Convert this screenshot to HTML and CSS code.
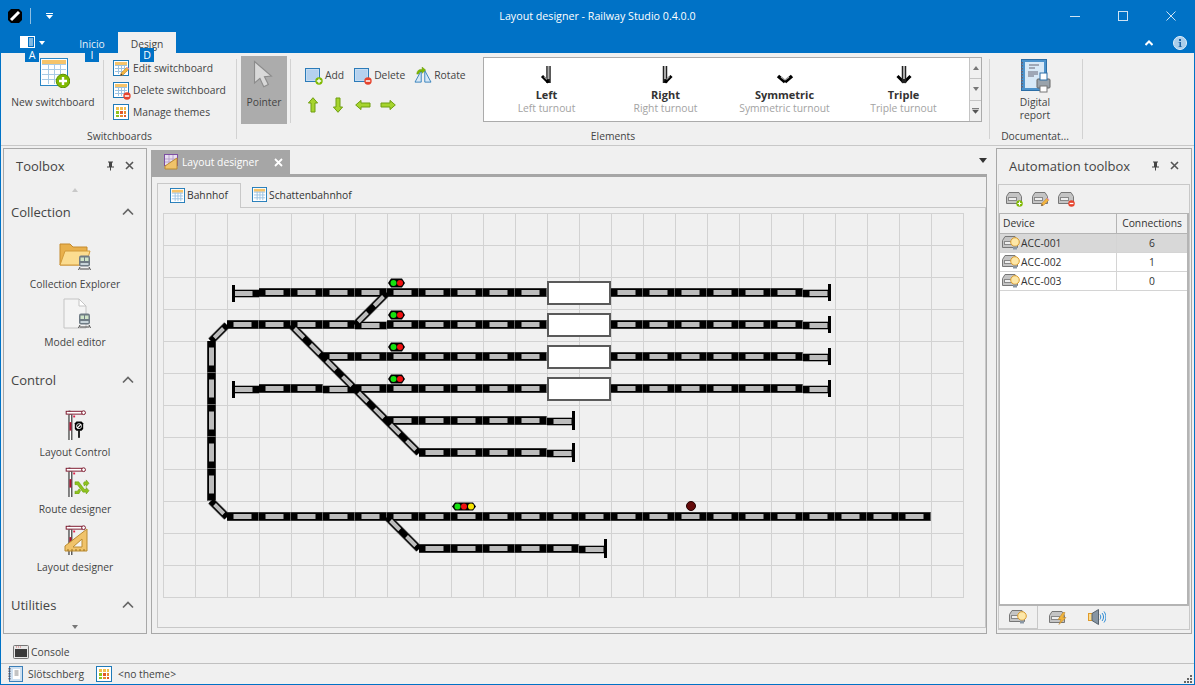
FILE: index.html
```html
<!DOCTYPE html>
<html lang="en">
<head>
<meta charset="utf-8">
<title>Layout designer - Railway Studio 0.4.0.0</title>
<link rel="stylesheet" href="styles.css">
</head>
<body>
<svg class="defs" width="0" height="0" aria-hidden="true">
  <defs>
    <symbol id="i-table" viewBox="0 0 16 16">
      <rect x=".5" y=".5" width="15" height="15" fill="#fff" stroke="#1f7ab8"/>
      <rect x="2" y="2" width="12" height="3" fill="#f6c46a"/>
      <path d="M2 5.500h12M2 8.500h12M2 11.500h12M5.500 5v9M8.500 5v9M11.500 5v9" stroke="#9cc3e2" fill="none"/>
    </symbol>
    <symbol id="i-table-big" viewBox="0 0 30 30">
      <rect x=".5" y=".5" width="27" height="27" fill="#fff" stroke="#2b86c5"/>
      <rect x="2" y="2" width="24" height="4" fill="#f6c46a"/>
      <path d="M2 6.500h24M2 11.500h24M2 16.500h24M2 21.500h24M8.500 6v20M14.500 6v20M20.500 6v20" stroke="#a8cbe6" fill="none"/>
      <circle cx="23" cy="23" r="6.800" fill="#7fb900" stroke="#5d9100"/>
      <path d="M19 23h8M23 19v8" stroke="#fff" stroke-width="2.400"/>
    </symbol>
    <symbol id="i-theme" viewBox="0 0 16 16">
      <rect x=".5" y=".5" width="15" height="15" fill="#fff" stroke="#1f7ab8"/>
      <path d="M3 3h3v3H3zM7 3h3v3H7zM11 3h2v3h-2z" fill="#f2c04f"/>
      <path d="M3 7h3v3H3zM3 11h3v2H3z" fill="#8fc31f"/>
      <path d="M7 7h3v3H7zM11 11h2v2h-2z" fill="#e2572b"/>
      <path d="M11 7h2v3h-2zM7 11h3v2H7z" fill="#e88a2e"/>
    </symbol>
    <symbol id="i-pencil" viewBox="0 0 16 16">
      <path d="M2 14l1-4 8-8 3 3-8 8z" fill="#f3b53f" stroke="#b5762a" stroke-width=".7"/>
      <path d="M11 2l3 3 1-1-3-3z" fill="#e58ac0"/>
      <path d="M2 14l1-3 2 2z" fill="#333"/>
    </symbol>
    <symbol id="i-square" viewBox="0 0 16 16">
      <rect x=".5" y="1.500" width="14" height="13" fill="#c5dcf2" stroke="#2b7bb9"/>
      <rect x="2" y="3" width="11" height="10" fill="#b5d1ee"/>
    </symbol>
    <symbol id="i-plus" viewBox="0 0 8 8">
      <circle cx="4" cy="4" r="3.700" fill="#7fb900"/><path d="M1.800 4h4.400M4 1.800v4.400" stroke="#fff" stroke-width="1.300"/>
    </symbol>
    <symbol id="i-minus" viewBox="0 0 8 8">
      <circle cx="4" cy="4" r="3.700" fill="#e5432d"/><path d="M1.800 4h4.400" stroke="#fff" stroke-width="1.500"/>
    </symbol>
    <symbol id="i-rotate" viewBox="0 0 20 18">
      <path d="M8 4v13H1z" fill="#d8e8f6" stroke="#2b7bb9"/>
      <path d="M12 4v13h7z" fill="#d8e8f6" stroke="#2b7bb9"/>
      <path d="M3 8c0-4 3-6 6-5V0l4 3.500L9 7V5C7 5 5 6 5 8z" fill="#7fb900" stroke="#5d9100" stroke-width=".5"/>
    </symbol>
    <symbol id="i-arrow" viewBox="0 0 16 16">
      <path d="M8 .7L12.600 6H10v9H6V6H3.400z" fill="#a6d42e" stroke="#6f9e10"/>
    </symbol>
    <symbol id="i-pointer" viewBox="0 0 30 36">
      <path d="M2 1v28l7-6 5 11 6-3-5-10 9-1z" fill="#d9d9d9" stroke="#8c8c8c" stroke-width="1.500"/>
    </symbol>
    <symbol id="i-report" viewBox="0 0 32 34">
      <rect x="2.500" y=".5" width="25" height="31" fill="#4d93cc" stroke="#2c6ea6"/>
      <rect x="6" y="3" width="19" height="26" fill="#d8e9f7"/>
      <path d="M10 6h10M10 9h6M9 13h10M9 15h10M9 17h6" stroke="#667" fill="none"/>
      <path d="M3 3v26" stroke="#667" stroke-width="2" stroke-dasharray="1.500 1.500"/>
      <rect x="18" y="20" width="13" height="9" rx="1" fill="#9aa3ab" stroke="#666"/>
      <rect x="21" y="14" width="7" height="7" fill="#fff" stroke="#2c6ea6"/>
      <rect x="21" y="27" width="7" height="6" fill="#fff" stroke="#777"/>
    </symbol>
    <symbol id="i-left" viewBox="0 0 18 18">
      <path d="M10.500 0v17" stroke="#222" stroke-width="4.500"/><path d="M10.500 0v13" stroke="#aaa" stroke-width="2"/><path d="M10.500 16.500L4 10" stroke="#000" stroke-width="3"/><path d="M9 13.500L6 10.500" stroke="#999" stroke-width="1.200"/>
    </symbol>
    <symbol id="i-right" viewBox="0 0 18 18">
      <path d="M8 0v17" stroke="#222" stroke-width="4.500"/><path d="M8 0v13" stroke="#aaa" stroke-width="2"/><path d="M8 16.500l6.500-6.500" stroke="#000" stroke-width="3"/><path d="M9.500 13.500l3-3" stroke="#999" stroke-width="1.200"/>
    </symbol>
    <symbol id="i-sym" viewBox="0 0 18 18">
      <path d="M9 16L2 10M9 16l7-6" stroke="#000" stroke-width="3.500" fill="none"/><path d="M9 14l-4-3M9 14l4-3" stroke="#aaa" stroke-width="1.300" fill="none"/>
    </symbol>
    <symbol id="i-triple" viewBox="0 0 18 18">
      <path d="M9 16.500L2.500 10M9 16.500l6.500-6.500" stroke="#000" stroke-width="3" fill="none"/><path d="M9 0v17" stroke="#222" stroke-width="4.500"/><path d="M9 0v13" stroke="#aaa" stroke-width="2"/>
    </symbol>
    <symbol id="i-folder" viewBox="0 0 32 32">
      <path d="M1 4h10l3 3h14v18H1z" fill="#e8b04c" stroke="#c58a2c"/>
      <path d="M1 25l5-14h25l-4 14z" fill="#fbdc90" stroke="#d29a3a"/>
    </symbol>
    <symbol id="i-page" viewBox="0 0 32 32">
      <path d="M5 1h15l7 7v22H5z" fill="#f4f4f4" stroke="#c4c4c4"/>
      <path d="M20 1v7h7z" fill="#fff" stroke="#c4c4c4"/>
    </symbol>
    <symbol id="i-train" viewBox="0 0 13 15">
      <rect x="1" y=".5" width="11" height="11" rx="2" fill="#6f7b84"/>
      <rect x="2.500" y="2.500" width="3.500" height="3.500" fill="#cfe4c8"/><rect x="7" y="2.500" width="3.500" height="3.500" fill="#cfe4c8"/>
      <rect x="2.500" y="8" width="8" height="2" fill="#c8d4da"/>
      <path d="M2 12l-1.500 3M11 12l1.500 3M2 14h9" stroke="#444" fill="none"/>
    </symbol>
    <symbol id="i-semaphore" viewBox="0 0 32 34">
      <path d="M7 3h2v2H7zM7 7h4v29H7z" fill="#000"/>
      <rect x="8" y="7" width="2" height="27" fill="#fff"/>
      <rect x="8" y="15" width="2" height="9" fill="#b01030"/>
      <rect x="4.500" y="3.500" width="17" height="3" fill="#fff" stroke="#7a1228"/>
      <circle cx="23" cy="5" r="2" fill="#fff" stroke="#7a1228"/>
      <rect x="12" y="8" width="2" height="2" fill="#e0204a"/>
    </symbol>
    <symbol id="i-stop" viewBox="0 0 12 20">
      <path d="M3 .5h6l2 2v7l-2 2H3l-2-2v-7z" fill="#000"/>
      <path d="M3.500 8.500l5-5" stroke="#fff" stroke-width="1.500"/><circle cx="6" cy="6" r="3" fill="none" stroke="#fff"/>
      <rect x="5" y="11" width="2" height="9" fill="#000"/>
    </symbol>
    <symbol id="i-cross" viewBox="0 0 17 16">
      <path d="M1 3h4l6 8h2V9l3 3.500-3 3.500v-2h-3.500L3.500 6H1zM1 13h2.500l2-2.500L7 12.500 5 16H1zM10 4.500L11 3h2V1l3 3.500L13 8V6h-1l-1 1.500z" fill="#8fc31f" stroke="#5d9100" stroke-width=".5"/>
    </symbol>
    <symbol id="i-square-rule" viewBox="0 0 24 24">
      <path d="M1 23v-5L23 1v22z" fill="#f0c36a" stroke="#b98a30"/>
      <path d="M9 19l9-8v8z" fill="#f6f6f6" stroke="#b98a30"/>
      <path d="M4 23v-2M8 23v-2M12 23v-2M16 23v-2M20 23v-2" stroke="#9a7020"/>
    </symbol>
    <symbol id="i-designer-tab" viewBox="0 0 16 16">
      <rect x=".5" y=".5" width="13" height="11" fill="#e8dff0" stroke="#7d4fa3"/>
      <path d="M1 5h12M1 8h12M5 1v10M9 1v10" stroke="#b9a2cc"/>
      <path d="M1 15v-3L13 4v11z" fill="#f0c36a" stroke="#b98a30"/>
    </symbol>
    <symbol id="i-device" viewBox="0 0 16 12">
      <path d="M3 .5h10l2.500 4v7H.5v-7z" fill="#c4c4c4" stroke="#777"/>
      <rect x="2.500" y="5.500" width="8" height="3" fill="#efefef" stroke="#888"/>
    </symbol>
    <symbol id="i-bulb" viewBox="0 0 10 13">
      <circle cx="5" cy="5" r="4.300" fill="#fde7a8" stroke="#d99b2e"/>
      <rect x="3" y="9.500" width="4" height="3" fill="#8a97a5"/>
    </symbol>
    <symbol id="i-bolt" viewBox="0 0 10 12">
      <path d="M6 0L1 7h3l-2 5 7-7H6l2-5z" fill="#f0b43c" stroke="#b87f20" stroke-width=".5"/>
    </symbol>
    <symbol id="i-speaker" viewBox="0 0 18 16">
      <rect x=".5" y="4.500" width="5" height="7" fill="#fbdc90" stroke="#e09a2a"/>
      <path d="M4 4.500L10.500 .5v15L4 11.500z" fill="#8695a3" stroke="#56626d"/>
      <path d="M12 5.500c1 1.500 1 3.500 0 5M14 4c2 2.500 2 5.500 0 8M16 2.500c2.500 3.500 2.500 7.500 0 11" stroke="#2b8bd5" fill="none"/>
    </symbol>
    <symbol id="i-pin" viewBox="0 0 9 10">
      <path d="M2 .5h5v1H6v4h2v1H5v3H4v-3H1v-1h2v-4H2z" fill="#444"/>
    </symbol>
    <symbol id="i-close" viewBox="0 0 9 9">
      <path d="M1 1l7 7M8 1L1 8" stroke="#555" stroke-width="1.600" fill="none"/>
    </symbol>
    <symbol id="i-chev" viewBox="0 0 12 8">
      <path d="M1 6.500l5-5 5 5" stroke="#666" stroke-width="1.700" fill="none"/>
    </symbol>
    <symbol id="i-console" viewBox="0 0 16 14">
      <rect x=".5" y=".5" width="15" height="13" rx="1" fill="#e8e8e8" stroke="#777"/>
      <rect x="2" y="4" width="12" height="8" fill="#3a3a3a"/>
      <path d="M3 2h1M5 2h1M7 2h1" stroke="#c66"/>
    </symbol>
    <symbol id="i-book" viewBox="0 0 16 16">
      <rect x="2.500" y=".5" width="13" height="15" fill="#cfe1f2" stroke="#3c7fb8"/>
      <rect x="6" y="3" width="7" height="10" fill="#fff"/>
      <path d="M7.500 5h4M7.500 7h4M7.500 9h4" stroke="#888"/>
      <path d="M2.500 2v12" stroke="#556" stroke-width="2" stroke-dasharray="1.500 1"/>
    </symbol>
    <pattern id="cells" x="163" y="213" width="32" height="32" patternUnits="userSpaceOnUse">
      <path class="cell-line" d="M.5 0v32M0 .5h32"/>
    </pattern>
    <path id="rail-straight" d="M259 292.500H547M611 292.500H803M227 324.500H355M387 324.500H547M611 324.500H803M323 356.500H547M611 356.500H803M259 388.500H323M355 388.500H547M611 388.500H803M387 420.500H547M419 452.500H547M227 516.500H931M419 548.500H579M211.500 341V501"/>
    <path id="rail-term" d="M259 293.500H233M803 293.500H829M355 325.500H387M259 389.500H233M803 389.500H829M323 389.500H355M803 325.500H829M803 357.500H829M547 421.500H573M547 453.500H573M579 549.500H605"/>
    <path id="rail-diag" d="M291 325L419 453M227 325L211 341M211 501L227 517M387 293L355 325M387 517L419 549"/>
  </defs>
</svg>

<div class="window">
  <header class="titlebar">
    <div class="qat">
      <svg class="app-icon" viewBox="0 0 14 14"><path d="M3 0h8l3 3v8l-3 3H3l-3-3V3z" fill="#000"/><path d="M3 11l8-8" stroke="#fff" stroke-width="3"/></svg>
      <span class="qat-sep"></span>
      <svg class="qat-caret" viewBox="0 0 7 6"><path d="M0 0h7v1H0zM0 2h7L3.500 6z" fill="#fff"/></svg>
    </div>
    <div class="title">Layout designer - Railway Studio 0.4.0.0</div>
    <div class="winctl">
      <span class="winbtn"><svg class="winglyph" viewBox="0 0 10 10"><path d="M0 5.500h10" stroke="#cfe3f3"/></svg></span>
      <span class="winbtn"><svg class="winglyph" viewBox="0 0 10 10"><rect x=".5" y=".5" width="9" height="9" fill="none" stroke="#cfe3f3"/></svg></span>
      <span class="winbtn"><svg class="winglyph" viewBox="0 0 10 10"><path d="M.5 .5l9 9M9.500 .5l-9 9" stroke="#cfe3f3"/></svg></span>
    </div>
  </header>

  <nav class="tabbar">
    <div class="appmenu">
      <svg class="appmenu-icon" viewBox="0 0 15 12"><rect x=".5" y=".5" width="6" height="11" fill="#fff" stroke="#fff"/><rect x="7.500" y=".5" width="7" height="11" fill="#0072c6" stroke="#fff"/><path d="M9 3h4M9 5h4M9 7h4M9 9h4" stroke="#fff"/></svg>
      <svg class="appmenu-caret" viewBox="0 0 6 4"><path d="M0 0h6L3 4z" fill="#fff"/></svg>
      <span class="keytip keytip-a">A</span>
    </div>
    <div class="tab">Inicio<span class="keytip keytip-i">I</span></div>
    <div class="tab tab-active">Design<span class="keytip keytip-d">D</span></div>
    <div class="tabbar-right">
      <svg class="collapse" viewBox="0 0 8 6"><path d="M.5 5L4 1.500 7.500 5" stroke="#fff" stroke-width="2" fill="none"/></svg>
      <svg class="info" viewBox="0 0 14 14"><circle cx="7" cy="7" r="6.500" fill="#a9cdea" stroke="#e3f0fa"/><path d="M6 3h2v2H6zM5.500 6H8v4.500h1V11H5.500v-.5h1V6.500h-1z" fill="#1c62a3"/></svg>
    </div>
  </nav>

  <section class="ribbon">
    <div class="group group-switch">
      <div class="group-body">
        <div class="big-btn big-new">
          <svg class="ico-new"><use href="#i-table-big"/></svg>
          <span>New switchboard</span>
        </div>
        <span class="vsep vsep-short"></span>
        <div class="small-col">
          <div class="small-btn"><span class="stack"><svg class="ico16"><use href="#i-table"/></svg><svg class="ov-pencil"><use href="#i-pencil"/></svg></span>Edit switchboard</div>
          <div class="small-btn"><span class="stack"><svg class="ico16"><use href="#i-table"/></svg><svg class="ov-badge"><use href="#i-minus"/></svg></span>Delete switchboard</div>
          <div class="small-btn"><span class="stack"><svg class="ico16"><use href="#i-theme"/></svg></span>Manage themes</div>
        </div>
      </div>
      <div class="group-label">Switchboards</div>
    </div>
    <span class="gsep"></span>
    <div class="group group-elements">
      <div class="group-body">
        <div class="pointer-btn">
          <svg class="ico-pointer"><use href="#i-pointer"/></svg>
          <span>Pointer</span>
        </div>
        <span class="vsep vsep-short2"></span>
        <div class="edit-col">
          <div class="edit-row">
            <div class="small-btn"><span class="stack"><svg class="ico16"><use href="#i-square"/></svg><svg class="ov-badge"><use href="#i-plus"/></svg></span>Add</div>
            <div class="small-btn"><span class="stack"><svg class="ico16"><use href="#i-square"/></svg><svg class="ov-badge"><use href="#i-minus"/></svg></span>Delete</div>
            <div class="small-btn"><span class="stack"><svg class="ico-rotate"><use href="#i-rotate"/></svg></span>Rotate</div>
          </div>
          <div class="arrow-row">
            <svg class="ico16"><use href="#i-arrow"/></svg>
            <svg class="ico16 rot180"><use href="#i-arrow"/></svg>
            <svg class="ico16 rot270"><use href="#i-arrow"/></svg>
            <svg class="ico16 rot90"><use href="#i-arrow"/></svg>
          </div>
        </div>
        <div class="gallery">
          <div class="gallery-items">
            <div class="gal-item"><svg class="ico-turnout"><use href="#i-left"/></svg><b>Left</b><span>Left turnout</span></div>
            <div class="gal-item"><svg class="ico-turnout"><use href="#i-right"/></svg><b>Right</b><span>Right turnout</span></div>
            <div class="gal-item"><svg class="ico-turnout"><use href="#i-sym"/></svg><b>Symmetric</b><span>Symmetric turnout</span></div>
            <div class="gal-item"><svg class="ico-turnout"><use href="#i-triple"/></svg><b>Triple</b><span>Triple turnout</span></div>
          </div>
          <div class="gallery-scroll">
            <span class="gs-btn"><i class="tri-up"></i></span>
            <span class="gs-btn"><i class="tri-down"></i></span>
            <span class="gs-btn"><i class="tri-more"></i></span>
          </div>
        </div>
      </div>
      <div class="group-label">Elements</div>
    </div>
    <span class="gsep"></span>
    <div class="group group-doc">
      <div class="group-body">
        <div class="big-btn big-doc">
          <svg class="ico-report"><use href="#i-report"/></svg>
          <span>Digital<br>report</span>
        </div>
      </div>
      <div class="group-label">Documentat...</div>
    </div>
    <span class="gsep"></span>
  </section>

  <main class="workspace">
    <aside class="panel toolbox">
      <div class="panel-head">
        <span class="panel-title">Toolbox</span>
        <svg class="pin"><use href="#i-pin"/></svg>
        <svg class="closex"><use href="#i-close"/></svg>
      </div>
      <div class="scroll-row scroll-top"><i class="tri-up tri-pale"></i></div>
      <div class="tb-head"><span>Collection</span><svg class="chev"><use href="#i-chev"/></svg></div>
      <div class="tb-item"><span class="tb-icon"><svg class="ico32"><use href="#i-folder"/></svg><svg class="ov-train"><use href="#i-train"/></svg></span><span>Collection Explorer</span></div>
      <div class="tb-item"><span class="tb-icon"><svg class="ico32"><use href="#i-page"/></svg><svg class="ov-train"><use href="#i-train"/></svg></span><span>Model editor</span></div>
      <div class="tb-head tb-head-next"><span>Control</span><svg class="chev"><use href="#i-chev"/></svg></div>
      <div class="tb-item"><span class="tb-icon"><svg class="ico32 ico-sema"><use href="#i-semaphore"/></svg><svg class="ov-stop"><use href="#i-stop"/></svg></span><span>Layout Control</span></div>
      <div class="tb-item"><span class="tb-icon"><svg class="ico32 ico-sema"><use href="#i-semaphore"/></svg><svg class="ov-cross"><use href="#i-cross"/></svg></span><span>Route designer</span></div>
      <div class="tb-item"><span class="tb-icon"><svg class="ico32 ico-sema"><use href="#i-semaphore"/></svg><svg class="ov-rule"><use href="#i-square-rule"/></svg></span><span>Layout designer</span></div>
      <div class="tb-head tb-head-next"><span>Utilities</span><svg class="chev"><use href="#i-chev"/></svg></div>
      <div class="scroll-row scroll-bottom"><i class="tri-down"></i></div>
    </aside>

    <section class="center">
      <div class="doc-tabs">
        <div class="doc-tab">
          <svg class="ico16"><use href="#i-designer-tab"/></svg>
          <span>Layout designer</span>
          <svg class="doc-close" viewBox="0 0 9 9"><path d="M1 1l7 7M8 1L1 8" stroke="#fff" stroke-width="1.800" fill="none"/></svg>
        </div>
        <i class="tri-down tri-dark doc-menu"></i>
      </div>
      <div class="doc-body">
        <div class="sheet-tabs">
          <div class="sheet-tab sheet-tab-active"><svg class="ico16"><use href="#i-table"/></svg>Bahnhof</div>
          <div class="sheet-tab"><svg class="ico16"><use href="#i-table"/></svg>Schattenbahnhof</div>
        </div>
        <div class="sheet">
          <svg class="diagram" viewBox="163 213 801 385" role="img" aria-label="Track layout Bahnhof">
            <rect class="cells" x="163" y="213" width="801" height="385"/>
            <g class="rail-edge"><use href="#rail-straight"/></g>
            <g class="term-edge"><use href="#rail-term"/></g>
            <g class="diag-edge"><use href="#rail-diag"/></g>
            <g class="rail-core"><use href="#rail-straight"/></g>
            <g class="term-core"><use href="#rail-term"/></g>
            <g class="diag-core"><use href="#rail-diag"/></g>
            <g class="rail-dash"><use href="#rail-straight"/></g>
            <g class="term-dash"><use href="#rail-term"/></g>
            <g class="diag-dash"><use href="#rail-diag"/></g>
            <path class="bumper" d="M233.500 285V302M233.500 381V398M829.500 284V301M829.500 316V333M829.500 348V365M829.500 380V397M573.500 411V430M573.500 443V462M605.500 539V558"/>
            <g class="building">
              <rect x="548" y="282" width="62" height="22"/>
              <rect x="548" y="314" width="62" height="22"/>
              <rect x="548" y="346" width="62" height="22"/>
              <rect x="548" y="378" width="62" height="22"/>
            </g>
            <g>
              <path class="sig" d="M391 278.500h11l3 4.500-3 4.500h-11l-3-4.500z"/><circle class="g" cx="393.500" cy="283" r="3"/><circle class="r" cx="400" cy="283" r="3"/>
              <path class="sig" d="M391 310.500h11l3 4.500-3 4.500h-11l-3-4.500z"/><circle class="g" cx="393.500" cy="315" r="3"/><circle class="r" cx="400" cy="315" r="3"/>
              <path class="sig" d="M391 342.500h11l3 4.500-3 4.500h-11l-3-4.500z"/><circle class="g" cx="393.500" cy="347" r="3"/><circle class="r" cx="400" cy="347" r="3"/>
              <path class="sig" d="M391 374.500h11l3 4.500-3 4.500h-11l-3-4.500z"/><circle class="g" cx="393.500" cy="379" r="3"/><circle class="r" cx="400" cy="379" r="3"/>
              <path class="sig" d="M455 502.500h18l3 4-3 4h-18l-3-4z"/><circle class="g" cx="457.500" cy="506.500" r="3"/><circle class="r" cx="464" cy="506.500" r="3"/><circle class="y" cx="471" cy="506.500" r="3"/>
              <circle class="dot" cx="691" cy="506" r="4.500"/>
            </g>
          </svg>
        </div>
      </div>
    </section>

    <aside class="panel automation">
      <div class="panel-head">
        <span class="panel-title">Automation toolbox</span>
        <svg class="pin"><use href="#i-pin"/></svg>
        <svg class="closex"><use href="#i-close"/></svg>
      </div>
      <div class="auto-inner">
        <div class="auto-tools">
          <span class="stack stack-dev"><svg class="ico-dev"><use href="#i-device"/></svg><svg class="ov-dev"><use href="#i-plus"/></svg></span>
          <span class="stack stack-dev"><svg class="ico-dev"><use href="#i-device"/></svg><svg class="ov-devpen"><use href="#i-pencil"/></svg></span>
          <span class="stack stack-dev"><svg class="ico-dev"><use href="#i-device"/></svg><svg class="ov-dev"><use href="#i-minus"/></svg></span>
        </div>
        <div class="devices">
          <div class="dev-row dev-header"><span class="dev-name">Device</span><span class="dev-conn">Connections</span></div>
          <div class="dev-row dev-selected"><span class="dev-name"><span class="stack stack-list"><svg class="ico-dev"><use href="#i-device"/></svg><svg class="ov-bulb"><use href="#i-bulb"/></svg></span>ACC-001</span><span class="dev-conn">6</span></div>
          <div class="dev-row"><span class="dev-name"><span class="stack stack-list"><svg class="ico-dev"><use href="#i-device"/></svg><svg class="ov-bulb"><use href="#i-bulb"/></svg></span>ACC-002</span><span class="dev-conn">1</span></div>
          <div class="dev-row"><span class="dev-name"><span class="stack stack-list"><svg class="ico-dev"><use href="#i-device"/></svg><svg class="ov-bulb"><use href="#i-bulb"/></svg></span>ACC-003</span><span class="dev-conn">0</span></div>
        </div>
        <div class="auto-tabs">
          <span class="auto-tab auto-tab-active"><span class="stack stack-list"><svg class="ico-dev"><use href="#i-device"/></svg><svg class="ov-bulb"><use href="#i-bulb"/></svg></span></span>
          <span class="auto-tab"><span class="stack stack-list"><svg class="ico-dev"><use href="#i-device"/></svg><svg class="ov-bulb"><use href="#i-bolt"/></svg></span></span>
          <span class="auto-tab"><svg class="ico-speaker"><use href="#i-speaker"/></svg></span>
        </div>
      </div>
    </aside>
  </main>

  <div class="console-bar"><svg class="ico-console"><use href="#i-console"/></svg><span>Console</span></div>
  <footer class="statusbar">
    <svg class="ico16"><use href="#i-book"/></svg>
    <span class="st-name">Slötschberg</span>
    <svg class="ico16"><use href="#i-theme"/></svg>
    <span class="st-theme">&lt;no theme&gt;</span>
    <svg class="grip" viewBox="0 0 8 8"><path d="M6 0h2v2H6zM3 3h2v2H3zM6 3h2v2H6zM0 6h2v2H0zM3 6h2v2H3zM6 6h2v2H6z" fill="#666"/></svg>
  </footer>
</div>
</body>
</html>
```
FILE: styles.css
```css
* { box-sizing: border-box; }
html, body { margin: 0; padding: 0; }
body {
  font-family: "Open Sans", "Noto Sans", sans-serif;
  font-size: 10.3px;
  color: #444;
  background: #f0f0f0;
}
svg { display: block; flex: none; }
i { display: block; }
.defs { position: absolute; }

.window {
  width: 1195px;
  height: 685px;
  border: 1px solid #0072c6;
  border-top: 0;
  background: #f0f0f0;
  display: flex;
  flex-direction: column;
  overflow: hidden;
}

/* title bar */
.titlebar {
  height: 32px;
  flex: none;
  margin: 0 -1px;
  background: #0072c6;
  display: grid;
  grid-template-columns: 1fr auto 1fr;
  align-items: center;
}
.qat { display: flex; align-items: center; padding-left: 8px; }
.app-icon { width: 14px; height: 14px; }
.qat-sep { width: 1px; height: 16px; background: #8fbfe3; margin-left: 8px; }
.qat-caret { width: 7px; height: 6px; margin-left: 15px; }
.title { color: #fff; font-size: 10.7px; }
.winctl { display: flex; justify-content: flex-end; align-self: stretch; }
.winbtn { width: 48px; display: flex; align-items: center; justify-content: center; }
.winglyph { width: 10px; height: 10px; }

/* ribbon tabs */
.tabbar {
  height: 21px;
  flex: none;
  margin: 0 -1px;
  background: #0072c6;
  display: flex;
  align-items: stretch;
  padding-left: 20px;
  position: relative;
}
.appmenu { width: 46px; display: flex; align-items: flex-start; padding-top: 4px; position: relative; }
.appmenu-icon { width: 15px; height: 12px; }
.appmenu-caret { width: 6px; height: 4px; margin: 5px 0 0 4px; }
.tab {
  width: 52px;
  text-align: center;
  line-height: 25px;
  color: #e8f1f8;
  position: relative;
}
.tab-active { width: 58px; background: #f0f0f0; color: #444; }
.keytip {
  position: absolute;
  top: 16px;
  width: 14px;
  height: 14px;
  background: #0072c6;
  color: #fff;
  font-size: 10.6px;
  line-height: 14px;
  text-align: center;
  z-index: 2;
}
.keytip-a { left: 5px; }
.keytip-i { left: 19px; }
.keytip-d { left: 22px; }
.tabbar-right { margin-left: auto; display: flex; align-items: center; padding-right: 8px; }
.collapse { width: 8px; height: 6px; margin-right: 20px; }
.info { width: 14px; height: 14px; }

/* ribbon */
.ribbon {
  height: 93px;
  flex: none;
  display: flex;
  align-items: flex-start;
  padding: 3px 0 0 2px;
  border-bottom: 1px solid #c8c8c8;
}
.group { height: 86px; display: flex; flex-direction: column; }
.group-body { height: 72px; display: flex; align-items: flex-start; flex: none; }
.group-label { text-align: center; line-height: 14px; margin-top: 1px; }
.group-switch { width: 233px; }
.group-elements { width: 752px; }
.group-doc { width: 92px; padding-right: 2px; }
.gsep { width: 1px; height: 80px; margin-top: 3px; background: #d2d2d2; flex: none; }
.vsep { width: 1px; background: #d2d2d2; flex: none; }
.vsep-short { height: 60px; margin: 4px 9px 0 0; }
.vsep-short2 { height: 64px; margin: 3px 0 0 3px; }

.big-btn { display: flex; flex-direction: column; align-items: center; text-align: center; }
.big-new { width: 100px; }
.ico-new { width: 30px; height: 30px; margin: 2px 0 5px 4px; }
.big-new span { line-height: 18px; }
.big-doc { width: 90px; }
.ico-report { width: 32px; height: 34px; margin-top: 3px; margin-bottom: 3px; }
.big-doc span { line-height: 13px; color: #444; }

.small-col { display: flex; flex-direction: column; padding-top: 1px; }
.small-btn { display: flex; align-items: center; height: 22px; white-space: nowrap; }
.stack { position: relative; display: block; width: 16px; height: 16px; margin-right: 4px; flex: none; }
.ico16 { width: 16px; height: 16px; }
.ov-pencil { position: absolute; right: -1px; bottom: -1px; width: 11px; height: 11px; }
.ov-badge { position: absolute; right: -2px; bottom: -2px; width: 8px; height: 8px; }
.ico-rotate { width: 18px; height: 16px; }

.pointer-btn {
  width: 46px;
  height: 68px;
  margin-left: 4px;
  background: #acacac;
  display: flex;
  flex-direction: column;
  align-items: center;
  color: #444;
}
.ico-pointer { width: 23px; height: 31px; margin: 3px 0 5px; }
.edit-col { width: 192px; padding: 8px 0 0 14px; display: flex; flex-direction: column; }
.edit-row { display: flex; gap: 9px; }
.edit-row .small-btn:first-child { margin-right: 1px; }
.arrow-row { display: flex; gap: 9px; margin-top: 11px; }
.rot90 { transform: rotate(90deg); }
.rot180 { transform: rotate(180deg); }
.rot270 { transform: rotate(270deg); }

.gallery {
  width: 499px;
  height: 65px;
  margin-top: 1px;
  background: #fff;
  border: 1px solid #ababab;
  display: flex;
}
.gallery-items { flex: 1; display: flex; padding-left: 3px; }
.gal-item { width: 119px; display: flex; flex-direction: column; align-items: center; }
.ico-turnout { width: 18px; height: 18px; margin-top: 8px; }
.gal-item b { color: #333; font-size: 11px; line-height: 14px; margin-top: 4px; }
.gal-item span { color: #a3a3a3; line-height: 13px; }
.gallery-scroll { width: 12px; border-left: 1px solid #c4c4c4; display: flex; flex-direction: column; }
.gs-btn { flex: 1; display: flex; align-items: center; justify-content: center; border-bottom: 1px solid #c4c4c4; background: #f0f0f0; }
.gs-btn:last-child { border-bottom: 0; }
.tri-up { width: 0; height: 0; border: 3.5px solid transparent; border-top: 0; border-bottom: 4px solid #777; }
.tri-down { width: 0; height: 0; border: 3.5px solid transparent; border-bottom: 0; border-top: 4px solid #777; }
.tri-more { width: 7px; height: 6px; background: #555; clip-path: polygon(0 0, 100% 0, 100% 16%, 0 16%, 0 33%, 100% 33%, 50% 100%, 0 33%); }
.tri-pale { border-bottom-color: #c8c8c8; }
.tri-dark { border-top-color: #333; border-width: 4.5px; border-bottom: 0; border-top-width: 5px; }

/* workspace */
.workspace {
  height: 494px;
  flex: none;
  display: flex;
  padding: 2px 3px 6px 2px;
  align-items: stretch;
}
.panel { border: 1px solid #a8a8a8; display: flex; flex-direction: column; }
.panel-head { height: 35px; flex: none; display: flex; align-items: center; padding-bottom: 2px; }
.panel-title { font-size: 13px; color: #444; flex: 1; padding-left: 12px; }
.pin { width: 9px; height: 10px; margin-right: 10px; }
.closex { width: 9px; height: 9px; margin-right: 12px; }

.toolbox { width: 144px; flex: none; }
.scroll-row { display: flex; justify-content: center; align-items: center; height: 15px; }
.scroll-top { height: 16px; padding-bottom: 3px; }
.scroll-bottom { height: 12px; margin-top: 4px; }
.tb-head { height: 24px; flex: none; display: flex; align-items: center; justify-content: space-between; font-size: 13px; padding: 0 12px 0 7px; color: #444; }
.tb-head-next { margin-top: 12px; }
.chev { width: 12px; height: 8px; }
.tb-item { height: 58px; display: flex; flex-direction: column; align-items: center; }
.tb-head + .tb-item { margin-top: 16px; }
.tb-icon { position: relative; width: 32px; height: 32px; margin-bottom: 5px; display: block; }
.ico32 { width: 32px; height: 32px; }
.ico-sema { margin-left: 2px; }
.ov-train { position: absolute; right: 0; bottom: 2px; width: 13px; height: 15px; }
.ov-stop { position: absolute; right: 7px; bottom: 2px; width: 10px; height: 17px; }
.ov-cross { position: absolute; right: 1px; bottom: 3px; width: 16px; height: 15px; }
.ov-rule { position: absolute; right: 3px; bottom: 3px; width: 24px; height: 24px; }

.center { width: 836px; flex: none; margin: 2px 0 0 4px; display: flex; flex-direction: column; }
.doc-tabs { height: 27px; flex: none; border-bottom: 3px solid #a6a6a6; display: flex; align-items: flex-start; position: relative; }
.doc-tab {
  width: 139px;
  height: 24px;
  background: #a6a6a6;
  color: #fff;
  display: flex;
  align-items: center;
  padding-left: 13px;
  gap: 2px;
}
.doc-close { width: 9px; height: 9px; margin-left: 13px; }
.doc-menu { position: absolute; right: 0; top: 8px; }
.doc-body { flex: 1; border: 1px solid #a8a8a8; border-top: 0; padding: 6px 0 5px 5px; display: flex; flex-direction: column; }
.sheet-tabs { height: 25px; flex: none; display: flex; position: relative; z-index: 1; }
.sheet-tab { display: flex; align-items: center; gap: 2px; padding: 0 10px 2px 11px; height: 25px; color: #333; white-space: nowrap; }
.sheet-tab .ico16 { width: 15px; height: 15px; }
.sheet-tab-active { width: 84px; border: 1px solid #c8c8c8; border-bottom: 0; background: #f0f0f0; padding-left: 12px; height: 25px; }
.sheet { flex: 1; margin-top: -1px; border: 1px solid #c8c8c8; padding: 5px; }
.diagram { width: 801px; height: 385px; }
.cells { fill: url(#cells); }
.cell-line { fill: none; stroke: #d2d2d2; stroke-width: 1; }

.rail-edge, .term-edge, .diag-edge { fill: none; stroke: #666; }
.rail-edge { stroke-width: 9px; }
.term-edge { stroke-width: 8px; }
.diag-edge { stroke-width: 8px; }
.rail-core, .term-core, .diag-core { fill: none; stroke: #000; }
.rail-core { stroke-width: 8px; stroke-dasharray: 31 1; }
.term-core { stroke-width: 7px; stroke-dasharray: 31 1; }
.diag-core { stroke-width: 6.5px; }
.rail-dash, .term-dash, .diag-dash { fill: none; stroke: #bcbcbc; }
.rail-dash { stroke-width: 5px; stroke-dasharray: 18 14; stroke-dashoffset: -6.5; }
.term-dash { stroke-width: 5px; stroke-dasharray: 18 14; stroke-dashoffset: -6.5; }
.diag-dash { stroke-width: 4px; stroke-dasharray: 13 9.63; stroke-dashoffset: -5; }
.bumper { fill: none; stroke: #000; stroke-width: 3px; }
.building rect { fill: #fff; stroke: #5a5a5a; stroke-width: 2px; }
.sig { fill: #000; }
.g { fill: #16e010; }
.r { fill: #f01010; }
.y { fill: #f6e400; }
.dot { fill: #640a0a; stroke: #200; stroke-width: 1px; }

.automation { width: 196px; flex: none; margin-left: 9px; }
.auto-inner { flex: 1; margin: 0 1px 3px; border: 1px solid #c8c8c8; display: flex; flex-direction: column; }
.auto-tools { height: 28px; flex: none; display: flex; align-items: center; gap: 10px; padding-left: 7px; }
.stack-dev { width: 16px; height: 15px; margin: 0; }
.ico-dev { width: 16px; height: 12px; }
.ov-dev { position: absolute; right: -1px; bottom: 0; width: 7px; height: 7px; }
.ov-devpen { position: absolute; right: -2px; bottom: 0; width: 10px; height: 10px; }
.devices { height: 393px; flex: none; background: #fff; border: 1px solid #b4b4b4; border-right-width: 2px; border-bottom-width: 2px; }
.dev-row { height: 19px; display: flex; border-bottom: 1px solid #d4d4d4; color: #333; }
.dev-header { height: 20px; background: #f0f0f0; border-bottom: 1px solid #b4b4b4; line-height: 18px; }
.dev-selected { background: #d8d8d8; }
.dev-name { width: 117px; display: flex; align-items: center; padding: 0 0 1px 2px; border-right: 1px solid #d4d4d4; white-space: nowrap; }
.dev-header .dev-name { padding-left: 3px; border-right-color: #b4b4b4; }
.dev-conn { flex: 1; text-align: center; line-height: 18px; white-space: nowrap; }
.stack-list { width: 18px; height: 13px; margin-right: 1px; }
.ov-bulb { position: absolute; left: 8px; top: 1px; width: 10px; height: 13px; }
.auto-tabs { flex: 1; display: flex; }
.auto-tab { width: 39px; display: flex; align-items: center; justify-content: center; padding-bottom: 1px; }
.auto-tab .stack-list { margin: 0; }
.auto-tab-active { border-right: 1px solid #c8c8c8; border-bottom: 1px solid #c8c8c8; }
.ico-speaker { width: 18px; height: 16px; }

/* bottom */
.console-bar { height: 24px; flex: none; display: flex; align-items: center; gap: 2px; padding-left: 12px; border-bottom: 1px solid #c0c0c0; }
.ico-console { width: 16px; height: 14px; }
.statusbar { flex: 1; display: flex; align-items: center; padding-left: 6px; position: relative; }
.st-name { width: 68px; margin-left: 5px; }
.st-theme { margin-left: 6px; }
.grip { margin-left: auto; margin-right: 2px; align-self: flex-end; width: 8px; height: 8px; margin-bottom: 1px; }
```
